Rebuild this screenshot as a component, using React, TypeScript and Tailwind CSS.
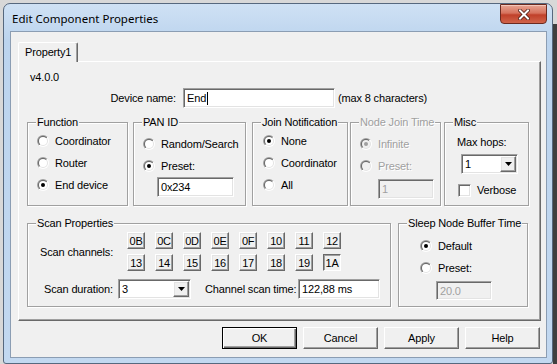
import React from "react";

const SUNKEN =
  "border border-t-[#a0a0a0] border-l-[#a0a0a0] border-b-white border-r-white shadow-[inset_1px_1px_0_#696969,inset_-1px_-1px_0_#e3e3e3]";
const RAISED =
  "border border-t-white border-l-white border-r-[#696969] border-b-[#696969] shadow-[inset_-1px_-1px_0_#a0a0a0,inset_1px_1px_0_#e3e3e3] bg-[#f0f0f0]";
const PRESSED =
  "border border-t-[#696969] border-l-[#696969] border-r-white border-b-white shadow-[inset_1px_1px_0_#a0a0a0] bg-[#f0f0f0]";
const DIS = "text-[#a0a0a0] text-shadow-[1px_1px_0_#ffffff]";

function Radio({ checked, disabled }: { checked?: boolean; disabled?: boolean }) {
  return (
    <svg width="12" height="12" viewBox="0 0 12 12" className="shrink-0">
      <defs>
        <linearGradient id="rdo" x1="0" y1="0" x2="1" y2="1">
          <stop offset="0.5" stopColor="#a0a0a0" />
          <stop offset="0.5" stopColor="#ffffff" />
        </linearGradient>
        <linearGradient id="rdi" x1="0" y1="0" x2="1" y2="1">
          <stop offset="0.5" stopColor="#696969" />
          <stop offset="0.5" stopColor="#e3e3e3" />
        </linearGradient>
      </defs>
      <circle cx="6" cy="6" r="6" fill="url(#rdo)" />
      <circle cx="6" cy="6" r="5" fill="url(#rdi)" />
      <circle cx="6" cy="6" r="4" fill={disabled ? "#f0f0f0" : "#ffffff"} />
      {checked && <circle cx="6" cy="6" r="2" fill={disabled ? "#a0a0a0" : "#000000"} />}
    </svg>
  );
}

function RadioRow({ label, checked, disabled }: { label: string; checked?: boolean; disabled?: boolean }) {
  return (
    <div className="flex h-[22px] items-center gap-[6px] whitespace-nowrap">
      <Radio checked={checked} disabled={disabled} />
      <span className={disabled ? DIS : ""}>{label}</span>
    </div>
  );
}

function Group({
  title,
  className,
  disabled,
  children,
}: {
  title: string;
  className: string;
  disabled?: boolean;
  children?: React.ReactNode;
}) {
  return (
    <div
      className={`relative h-[84px] shrink-0 border border-[#a0a0a0] shadow-[inset_1px_1px_0_#ffffff,1px_1px_0_#ffffff] ${className}`}
    >
      <span
        className={`absolute -top-[8px] left-[8px] bg-[#f0f0f0] px-[1px] leading-[14px] whitespace-nowrap ${
          disabled ? DIS : ""
        }`}
      >
        {title}
      </span>
      {children}
    </div>
  );
}

function Field({
  value,
  className,
  disabled,
  children,
}: {
  value: string;
  className: string;
  disabled?: boolean;
  children?: React.ReactNode;
}) {
  return (
    <div
      className={`flex shrink-0 items-center pl-[3px] whitespace-nowrap ${SUNKEN} ${
        disabled ? "bg-[#f0f0f0] text-[#a0a0a0]" : "bg-white"
      } ${className}`}
    >
      {value}
      {children}
    </div>
  );
}

function Combo({ value, className }: { value: string; className: string }) {
  return (
    <div className={`flex h-[20px] shrink-0 bg-white p-[1px] ${SUNKEN} ${className}`}>
      <span className="flex-1 pl-[2px] leading-[16px]">{value}</span>
      <div className={`flex w-[16px] items-center justify-center ${RAISED}`}>
        <svg width="7" height="4" viewBox="0 0 7 4">
          <path d="M0 0h7L3.5 4z" fill="#000" />
        </svg>
      </div>
    </div>
  );
}

function ChanBtn({ label, pressed }: { label: string; pressed?: boolean }) {
  return (
    <div
      className={`flex h-[17px] w-[18px] items-center justify-center leading-[14px] tracking-[-0.3px] ${
        pressed ? PRESSED : RAISED
      }`}
    >
      {label}
    </div>
  );
}

function Button({ label, def }: { label: string; def?: boolean }) {
  return (
    <div
      className={`flex h-[22px] w-[75px] items-center justify-center bg-[#f0f0f0] ${
        def
          ? "border border-black shadow-[inset_1px_1px_0_#ffffff,inset_-1px_-1px_0_#696969,inset_-2px_-2px_0_#a0a0a0]"
          : "border border-t-white border-l-white border-r-[#696969] border-b-[#696969] shadow-[inset_-1px_-1px_0_#a0a0a0]"
      }`}
    >
      {label}
    </div>
  );
}

export default function App() {
  const row1 = ["0B", "0C", "0D", "0E", "0F", "10", "11", "12"];
  const row2 = ["13", "14", "15", "16", "17", "18", "19", "1A"];
  return (
    <div className="flex h-[364px] w-[557px] overflow-hidden bg-[#d8d8d8] font-['Liberation_Sans',Arial,sans-serif] text-[11px] leading-[14px] tracking-[-0.15px] text-black">
      <div className="ml-[3px] mt-[3px] flex h-[361px] w-[550px] shrink-0 flex-col rounded-t-[7px] rounded-b-[3px] border border-[#56687e] bg-[linear-gradient(180deg,#cfe1f4_0%,#bcd4ee_10%,#c2d8f0_100%)]">
        {/* Title bar */}
        <div className="flex h-[27px] items-start justify-between">
          <span className="ml-[8px] mt-[7px] font-['Noto_Sans',sans-serif] text-[11.5px] leading-[16px] tracking-normal text-black">
            Edit Component Properties
          </span>
          <div className="mr-[5px] flex h-[20px] w-[47px] items-center justify-center rounded-b-[4px] border border-[#6b2a20] bg-[linear-gradient(180deg,#e8a593_0%,#d6725d_45%,#c0402a_55%,#d0644a_100%)] shadow-[inset_0_1px_0_#f3c8bb]">
            <svg width="12" height="11" viewBox="0 0 12 11">
              <path d="M2 1.5l8 8M10 1.5l-8 8" stroke="#4a1a12" strokeWidth="3.6" strokeLinecap="square" />
              <path d="M2 1.5l8 8M10 1.5l-8 8" stroke="#ffffff" strokeWidth="2" strokeLinecap="square" />
            </svg>
          </div>
        </div>

        {/* Client area */}
        <div className="ml-[6px] mr-[5px] flex h-[327px] flex-col border border-[#8b9db3] bg-[#f0f0f0] pt-[10px]">
          {/* Tab strip */}
          <div className="flex pl-[7px]">
            <div className="relative z-10 -mb-[1px] h-[20px] w-[60px] rounded-t-[2px] border-l border-t border-r border-l-white border-t-white border-r-[#696969] bg-[#f0f0f0] pl-[6px] pt-[2px] shadow-[inset_-1px_0_0_#a0a0a0]">
              Property1
            </div>
          </div>

          {/* Tab page */}
          <div className="ml-[7px] flex h-[260px] w-[523px] flex-col border border-t-white border-l-white border-r-[#696969] border-b-[#696969] shadow-[inset_-1px_-1px_0_#a0a0a0]">
            <div className="mt-[8px] pl-[11px]">v4.0.0</div>

            <div className="mt-[4px] flex h-[20px] items-center whitespace-nowrap">
              <span className="w-[157px] text-right">Device name:</span>
              <Field value="End" className="ml-[7px] h-[20px] w-[152px]">
                <span className="ml-[1px] h-[13px] w-[1px] bg-black" />
              </Field>
              <span className="ml-[3px]">(max 8 characters)</span>
            </div>

            {/* Groups row */}
            <div className="mt-[14px] flex pl-[8px]">
              <Group title="Function" className="w-[101px] pl-[9px] pt-[7px]">
                <RadioRow label="Coordinator" />
                <RadioRow label="Router" />
                <RadioRow label="End device" checked />
              </Group>
              <Group title="PAN ID" className="ml-[5px] w-[113px] pl-[9px] pt-[10px]">
                <RadioRow label="Random/Search" />
                <RadioRow label="Preset:" checked />
                <Field value="0x234" className="ml-[14px] h-[20px] w-[77px]" />
              </Group>
              <Group title="Join Notification" className="ml-[6px] w-[96px] pl-[10px] pt-[7px]">
                <RadioRow label="None" checked />
                <RadioRow label="Coordinator" />
                <RadioRow label="All" />
              </Group>
              <Group title="Node Join Time" disabled className="ml-[2px] w-[91px] pl-[9px] pt-[10px]">
                <RadioRow label="Infinite" checked disabled />
                <RadioRow label="Preset:" disabled />
                <Field value="1" disabled className="ml-[18px] mt-[2px] h-[20px] w-[56px]" />
              </Group>
              <Group title="Misc" className="ml-[3px] w-[85px] pl-[12px] pt-[12px]">
                <div className="whitespace-nowrap">Max hops:</div>
                <Combo value="1" className="ml-[4px] mt-[5px] w-[57px]" />
                <div className="ml-[1px] mt-[9px] flex h-[14px] items-center gap-[6px]">
                  <div className={`h-[13px] w-[13px] bg-white ${SUNKEN}`} />
                  <span>Verbose</span>
                </div>
              </Group>
            </div>

            {/* Scan row */}
            <div className="mt-[17px] flex pl-[8px]">
              <Group title="Scan Properties" className="w-[364px] pt-[8px]">
                <div className="flex items-center pl-[12px]">
                  <span className="w-[87px] whitespace-nowrap">Scan channels:</span>
                  <div className="flex flex-col gap-[5px]">
                    <div className="flex gap-[10px]">
                      {row1.map((c) => (
                        <ChanBtn key={c} label={c} />
                      ))}
                    </div>
                    <div className="flex gap-[10px]">
                      {row2.map((c) => (
                        <ChanBtn key={c} label={c} pressed={c === "1A"} />
                      ))}
                    </div>
                  </div>
                </div>
                <div className="mt-[8px] flex h-[20px] items-center whitespace-nowrap pl-[16px]">
                  <span className="w-[74px] shrink-0">Scan duration:</span>
                  <Combo value="3" className="w-[73px]" />
                  <span className="ml-[14px] w-[93px] shrink-0">Channel scan time:</span>
                  <Field value="122,88 ms" className="h-[20px] w-[82px]" />
                </div>
              </Group>
              <Group title="Sleep Node Buffer Time" className="ml-[7px] w-[130px] pl-[21px] pt-[11px]">
                <RadioRow label="Default" checked />
                <RadioRow label="Preset:" />
                <Field value="20.0" disabled className="ml-[16px] mt-[2px] h-[19px] w-[56px]" />
              </Group>
            </div>
          </div>

          {/* Buttons */}
          <div className="mt-[6px] flex justify-end gap-[6px] pr-[6px]">
            <Button label="OK" def />
            <Button label="Cancel" />
            <Button label="Apply" />
            <Button label="Help" />
          </div>
        </div>
      </div>
      <div className="mt-[24px] h-full flex-1 bg-[#3f3f3f]" />
    </div>
  );
}
